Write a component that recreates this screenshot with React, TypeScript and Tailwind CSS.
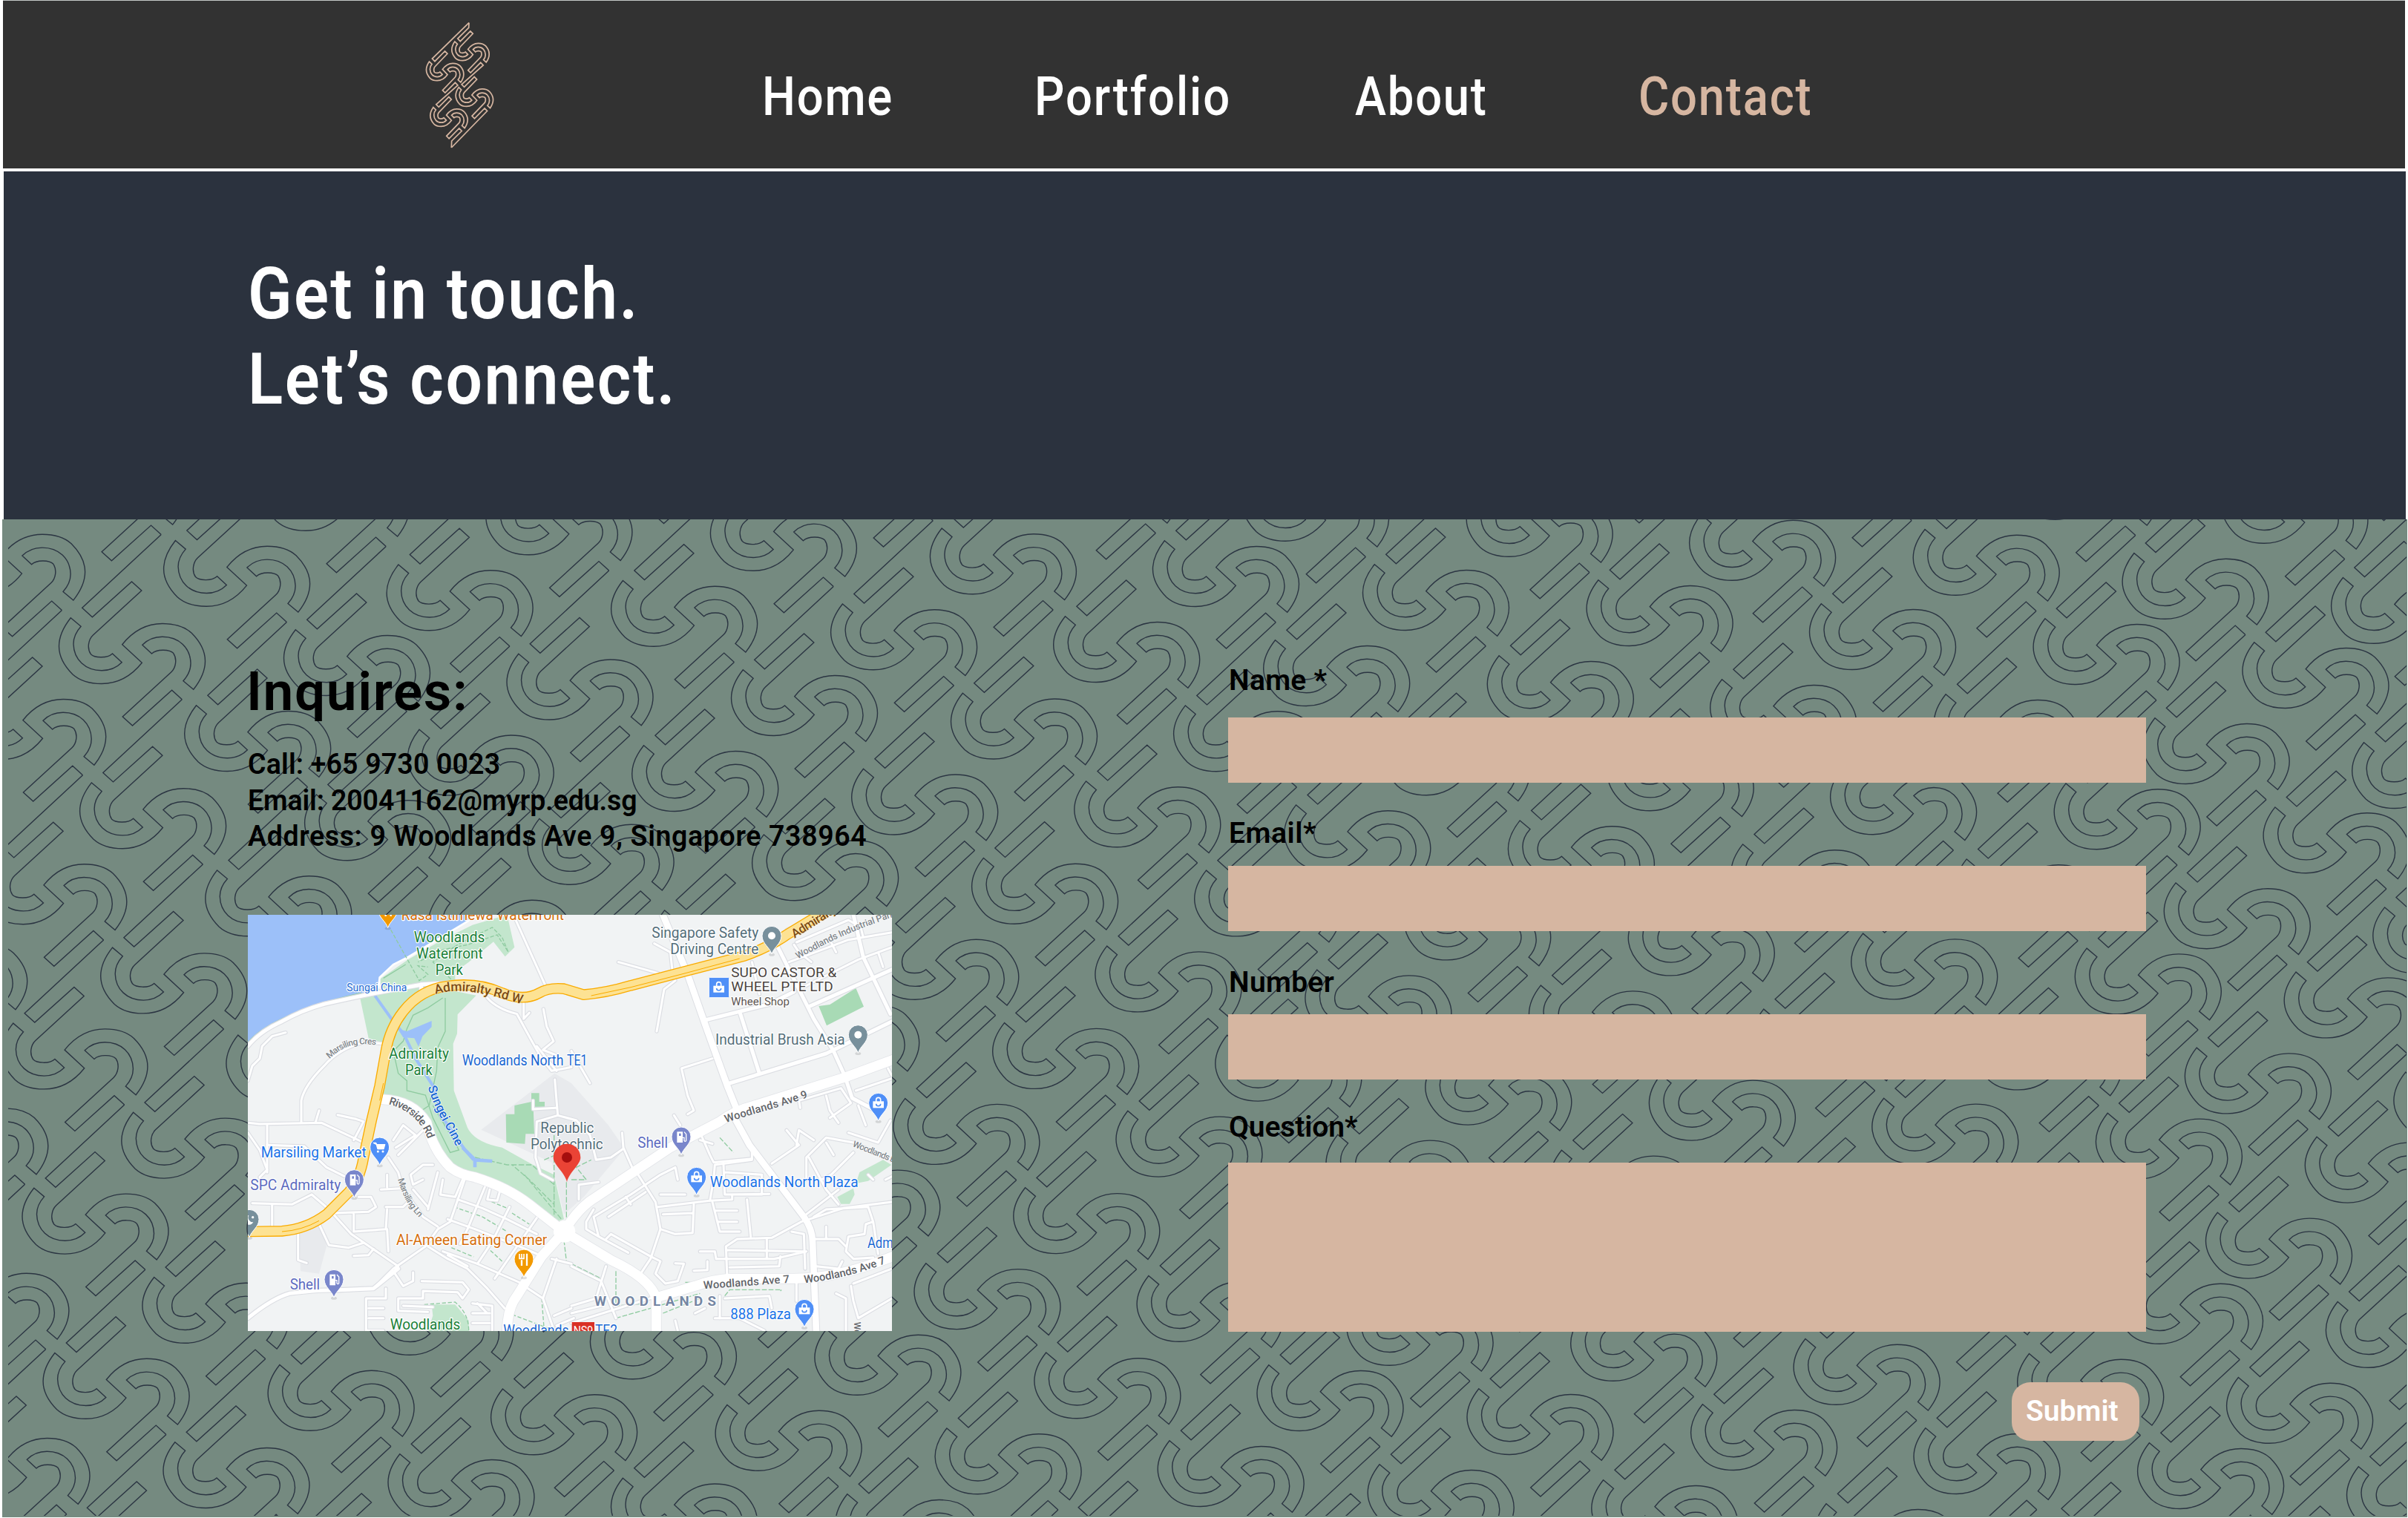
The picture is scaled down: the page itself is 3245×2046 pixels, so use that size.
import React from "react";

type Pt = [number, number];

/* ---------- ornament geometry ---------- */

const HALF_A =
  "L-67.3 -61.7 L-53.6 -49.3 L-0.5 -97 L12.8 -85 L-52.6 -25 C-59 -19 -61 -7 -55.6 .7 C-51 5.5 -34 7 -26.5 0 L-13.8 11.7 C-21 19 -31 22.7 -40.8 22.7 C-63 22.7 -78.5 8 -79 -13 C-79 -22 -75 -30 -68.9 -36.7 L-82.7 -48.3 C-94 -34 -98.5 -22 -98.5 -10 C-98.5 4 -90 18 -80 28 C-70 37 -56 40.5 -41 40.5 C-18 40.5 0 29 13.3 12.3 L-13.3 -12.3";
const HALF_B =
  "C0 -29 18 -40.5 41 -40.5 C56 -40.5 70 -37 80 -28 C90 -18 98.5 -4 98.5 10 C98.5 22 94 34 82.7 48.3 L68.9 36.7 C75 30 79 22 79 13 C78.5 -8 63 -22.7 40.8 -22.7 C31 -22.7 21 -19 13.8 -11.7 L26.5 0 C34 -7 51 -5.5 55.6 -.7 C61 7 59 19 52.6 25 L-12.8 85 L.5 97 L53.6 49.3 L67.3 61.7";

const UNIT = `M39.2 -160.5 ${HALF_A} ${HALF_B}`;
const PERIOD: Pt = [28.1, 222.2];
const LEFT_STEP: Pt = [-133.8, 102];

const STRANDS: Pt[] = [
  [-118, 868], [178, 881], [481, 897], [781.5, 929.5], [1084, 951], [1380, 982.5],
  [1652, 777], [1935, 809], [2236.6, 830], [2537, 862], [2838.6, 882], [3120.5, 914], [3402, 947],
];

const SPOTS: Pt[] = STRANDS.flatMap(([x, y]) => {
  const out: Pt[] = [];
  for (let m = -3; m < 7; m++) {
    const px = x + m * PERIOD[0];
    const py = y + m * PERIOD[1];
    out.push([px, py], [px + LEFT_STEP[0], py + LEFT_STEP[1]]);
  }
  return out.filter((p) => p[1] > 540 && p[1] < 2260);
});

function Ornament() {
  return (
    <svg className="absolute left-[8px] top-0 h-[1343px] w-[3232px]" viewBox="11 700 3232 1343" fill="none">
      <defs>
        <path id="unit" d={UNIT} />
      </defs>
      <g stroke="#2b3542" strokeWidth="1.4">
        {SPOTS.map(([x, y], i) => (
          <use key={i} href="#unit" x={x} y={y} />
        ))}
      </g>
    </svg>
  );
}

function transformPath(d: string, kx: number, ky: number, sx: number, sy: number) {
  let n = 0;
  return d.replace(/-?\d*\.?\d+/g, (v) => {
    const out = n % 2 === 0 ? kx + parseFloat(v) * sx : ky + parseFloat(v) * sy;
    n += 1;
    return out.toFixed(1);
  });
}

const logoS = (x: number, y: number) =>
  `${transformPath(HALF_A, x, y, 0.768, 0.87)} ${transformPath(HALF_B, x, y, 0.768, 0.87)}`;

function Logo() {
  const right = `M278 92 L277 112 ${logoS(284, 210)} ${logoS(300, 395)} L207 597`;
  const left = `M278 92 ${logoS(181, 291)} ${logoS(197, 476)} L208 570 L207 597`;
  return (
    <svg className="h-[174px] w-[98px]" viewBox="98 84 294 522" fill="none" stroke="#d6b6a1" strokeWidth="5.2">
      <path d={right} />
      <path d={left} />
    </svg>
  );
}

/* ---------- map ---------- */

const MINOR = [
  "M12 680 L30 620 L60 590 L70 540 L110 500 L165 485",
  "M565 530 L480 525 Q380 550 320 620 Q240 700 228 760 L228 850",
  "M12 850 L60 855 L310 850 L480 930",
  "M90 860 L90 1050 M300 800 L285 850 M375 818 L450 835 L480 845 L440 920",
  "M1095 30 L1140 130 L1215 295",
  "M980 345 Q1020 390 1100 410 L1160 520 L1200 590 L1240 640 L1320 625",
  "M1127 365 L1127 430 L1150 405 M1207 390 L1220 460 L1248 520 L1205 555 L1255 575 M1180 540 L1260 640",
  "M1253 675 L1265 820 L1180 845 L1175 990 L1195 1055 L1245 1082 M1165 760 L1165 795 L1255 790",
  "M1265 820 L1340 840 L1395 900 L1420 1000 L1480 990 L1530 955",
  "M12 890 L60 960 L90 1040 L60 1070 M90 940 L240 945 L330 1030 L470 1100",
  "M30 1175 L190 1180 L270 1140 M110 1180 L110 1270 M270 1140 L340 1200 L430 1300 L620 1430 L610 1440",
  "M360 1215 L500 1210 L530 1190 L510 1150 L460 1150 M570 1190 L640 1190 L660 1170 M440 1220 L440 1290 L570 1280 L575 1200 M575 1280 L580 1370",
  "M300 1260 L340 1345 L420 1355 L480 1335 M215 1300 L215 1405 L250 1417 M440 1388 L500 1385 L520 1360",
  "M580 990 L620 1050 L640 1120 L720 1230 L780 1270",
  "M610 950 L690 900 L640 860 L600 920 M620 980 L720 880 M550 1120 L630 1115 M575 1060 L575 1110",
  "M760 1020 L720 1020 L670 1060 L680 1100 L720 1080 M680 1120 L740 1190",
  "M890 1075 L830 1250 L780 1280 L730 1350 L600 1440 L520 1520 L360 1530",
  "M780 1050 L740 1200 M800 1080 L790 1140 L850 1150 L880 1080 M970 1110 L900 1280 L870 1340",
  "M1070 1190 L1000 1330 L940 1420 M860 1160 L960 1195 L1060 1240 L1180 1300 M820 1240 L930 1280 L1110 1350 L1180 1380",
  "M1180 1235 L1100 1350 L1010 1480 M740 1350 L820 1400 L900 1440 L980 1520 L1050 1600",
  "M800 1370 L940 1420 L1120 1500 M820 1385 L900 1430 M990 1120 L980 1160 L1020 1165 L1030 1130",
  "M600 1450 L640 1510 L680 1490 L680 1455 M715 1490 L880 1495 L905 1525 L880 1560 L860 1535 L720 1530 L720 1560 L620 1560 L620 1610 L740 1615",
  "M640 1590 L760 1595 M490 1560 L570 1560 L570 1520 M490 1560 L490 1690 L560 1690 M500 1600 L560 1600 M500 1640 L560 1640",
  "M920 1580 L1000 1590 L1000 1690 M920 1620 L990 1620 M920 1660 L990 1660 M940 1580 L980 1620",
  "M1240 1400 L1320 1420 M1145 1520 L1205 1560 L1250 1690 M1205 1560 L1260 1400 M1250 1630 L1320 1600 M1260 1670 L1330 1640",
  "M1655 125 L1720 160 L1730 250 M1510 200 L1670 245 M1740 275 L1695 310 L1665 480",
  "M1890 590 L1765 630 L1790 740 L1815 800 L1790 815 M1320 560 L1395 690",
  "M2050 200 L2080 330 M2220 130 L2240 160 L2290 200 M2230 120 L2440 30 L2490 60 L2500 100",
  "M2200 200 L2440 110 L2616 80 M2190 70 L2330 9 M2370 120 L2390 160 M2260 300 L2480 190 L2616 140 M2560 160 L2580 220",
  "M2350 740 L2365 800 L2400 850 M2365 830 L2450 770 L2410 710 L2240 760 M2470 720 L2616 670 M2600 630 L2616 660",
  "M1735 820 L1760 860 M2240 760 L2245 790 M2480 780 L2510 860",
  "M1525 890 L1530 950 L1570 1040 M1590 1060 L1660 1170 L1680 1280 L1640 1400 L1600 1460",
  "M1410 1200 L1380 1250 L1380 1280 L1430 1310 L1550 1375 M1410 1230 L1560 1140 L1680 1060 L1740 1030 L1750 1080 M1410 1230 L1430 1310",
  "M1470 1230 L1620 1130 M1540 1150 L1560 1180 M1460 1320 L1480 1300 L1640 1390 L1680 1410 L1660 1460 L1700 1500 L1750 1490 L1775 1420 L1740 1418",
  "M1430 1090 L1350 1100 L1350 1160 M1670 1190 L1880 1165 L1895 1080 L1900 1020 L2050 1000 L2050 960",
  "M1680 1280 L1740 1300 L1810 1295 L1815 1180 M1690 1220 L1810 1215 M1680 1140 L1780 1140",
  "M1880 1165 L1970 1160 L1970 1140 L2090 1140 L2090 1060 L1940 1050 M1935 1020 L1940 1140 L2120 1138",
  "M1890 1170 L1920 1290 L2000 1290 M1900 1205 L1990 1205 M1910 1250 L1990 1250 M2030 1160 L2045 1310",
  "M1950 1480 L1945 1350 L1990 1320 L2130 1315 L2250 1250 L2420 1195 L2616 1170",
  "M1950 1365 L2260 1370 M1950 1400 L2140 1400 L2270 1370 M2110 1320 L2110 1400 M1840 1370 L1900 1370 L1905 1400 L1945 1400 M1960 1435 L2160 1430 L2165 1390 M1815 1448 L1870 1445 L1870 1410",
  "M1845 900 L1880 980 L1895 1010 L2050 995 M1840 920 L1890 935 M2000 870 L2055 960 M2130 1015 L2240 940 L2190 880 M2230 940 L2240 880 L2300 920",
  "M2270 1080 L2270 990 L2350 910 L2460 930 L2616 1000 M2280 990 L2350 1120 L2400 1180 M2350 930 L2380 980 M2460 970 L2370 1060 L2330 1080 M2440 890 L2560 930 L2610 840",
  "M2270 1220 L2400 1120 M2300 1230 L2350 1200 L2520 1190 L2540 1250 L2560 1380 M2540 1250 L2510 1260 L2505 1300 L2440 1310 L2430 1370 L2460 1400 L2540 1395 M2300 1320 L2400 1320 L2430 1350 M2350 1270 L2350 1320",
  "M2210 1290 L2260 1300 L2265 1440 M2310 1430 L2400 1440 L2415 1410 M2230 1490 L2230 1570 M2450 1510 L2460 1570 L2480 1640 L2616 1560 M2460 1500 L2616 1440 M2390 1540 L2430 1560 L2430 1690",
  "M1940 1560 L2120 1550 L2130 1600 M1900 1640 L2000 1640 L2100 1690 M1740 1650 L1750 1690 M1320 1590 L1420 1560 L1460 1430 M1320 1620 L1440 1590 M1320 1430 L1440 1490 L1500 1640 M1320 1660 L1700 1540",
  "M2520 1060 L2540 1080 M2630 1060 L2590 1080 M1920 1550 L1920 1640 M1820 1620 L1860 1600",
];

const MEDIUM = [
  "M12 540 Q60 480 150 440 Q230 395 320 370 Q430 345 530 325 L720 290 L850 283 M713 290 L713 330",
  "M2150 130 L2220 270 L2300 430 L2380 560 L2425 660 L2455 750 L2550 800",
  "M2460 9 L2500 180 L2610 410",
  "M1860 435 L2120 370 L2220 320 M2280 380 L2616 230 M1960 690 L2350 570 L2616 440 M2000 400 L2080 650",
  "M12 1640 Q110 1560 180 1540 Q300 1525 360 1527 L520 1520 L620 1440",
];

const MAJOR = [
  "M1690 9 L1790 250 L1860 450 L1950 700 L1990 800 L1985 840 L2040 940 L2260 1230 Q2295 1280 2295 1330 L2310 1700",
];

const ARTERIAL = [
  "M555 755 Q680 760 735 850 Q760 960 830 1030 Q870 1060 930 1070 Q1060 1110 1150 1180 L1290 1290 L1480 1405 Q1640 1480 1663 1560 L1663 1700",
  "M1060 1700 Q1060 1600 1100 1550 L1200 1390 L1290 1290 Q1350 1190 1420 1150 L1720 950 L1920 845 Q1980 800 2060 780 L2270 715 L2430 665 L2620 595",
  "M1670 1555 L1820 1510 Q1900 1482 1960 1480 L2220 1480 Q2400 1480 2620 1390",
];

const TRUNK =
  "M12 1290 L150 1288 Q250 1280 330 1220 L420 1130 Q465 1080 480 990 L512 840 L545 700 L570 560 Q585 470 640 400 Q710 310 820 297 Q940 280 1040 325 Q1130 360 1190 325 Q1230 302 1290 308 L1370 332 Q1460 325 1560 295 L1770 240 L2020 175 Q2120 140 2190 90 L2330 5";

function Roads() {
  const layer = (ds: string[], w: number, color: string) => (
    <g fill="none" stroke={color} strokeWidth={w} strokeLinecap="round" strokeLinejoin="round">
      {ds.map((d) => (
        <path key={d} d={d} />
      ))}
    </g>
  );
  return (
    <g>
      {layer(MINOR, 16, "#dcdee3")}
      {layer(MEDIUM, 22, "#dcdee3")}
      {layer(MAJOR, 32, "#dcdee3")}
      {layer(ARTERIAL, 44, "#e3e5e9")}
      {layer(MINOR, 9, "#ffffff")}
      {layer(MEDIUM, 15, "#ffffff")}
      {layer(MAJOR, 26, "#ffffff")}
      {layer(ARTERIAL, 39, "#ffffff")}
      <circle cx="1292" cy="1290" r="44" fill="#fff" />
      {layer([TRUNK], 44, "#f9ab00")}
      {layer([TRUNK], 36, "#fde293")}
      <path d="M1400 336 L1560 302 L1770 248 L2000 186 M560 690 L545 760 M150 1290 Q230 1285 300 1246" fill="none" stroke="#f9ab00" strokeWidth="3" />
    </g>
  );
}

interface LabelProps {
  x: number;
  y: number;
  w: number;
  size?: number;
  color: string;
  children: string;
  weight?: number;
}

function Label({ x, y, w, size = 58, color, children, weight = 400 }: LabelProps) {
  return (
    <text x={x} y={y} textLength={w} lengthAdjust={weight === 400 ? "spacingAndGlyphs" : "spacing"} fontSize={size} fontWeight={weight} fill={color} stroke="#ffffff" strokeWidth="7" strokeLinejoin="round" paintOrder="stroke">
      {children}
    </text>
  );
}

function CurveLabel({ id, d, w, size, color, children, halo = "#ffffff" }: { id: string; d: string; w: number; size: number; color: string; children: string; halo?: string }) {
  return (
    <g>
      <path id={id} d={d} fill="none" />
      <text fontSize={size} fontWeight={500} fill={color} stroke={halo} strokeWidth="4" strokeLinejoin="round" paintOrder="stroke">
        <textPath href={`#${id}`} textLength={w}>
          {children}
        </textPath>
      </text>
    </g>
  );
}

const GLYPHS: Record<string, React.ReactNode> = {
  dot: <circle cx="0" cy="-74" r="15" fill="#fff" />,
  lock: (
    <g>
      <path d="M-9 -78 V-86 A9 9 0 0 1 9 -86 V-78" fill="none" stroke="#fff" strokeWidth="5" />
      <path d="M-22 -80 H22 V-53 H-22 Z" fill="#fff" />
      <path d="M-9 -70 A9 9 0 0 0 9 -70" fill="none" stroke="#4f8ff7" strokeWidth="5" />
    </g>
  ),
  fuel: (
    <g>
      <path d="M-17 -94 H6 V-50 H-17 Z" fill="#fff" />
      <path d="M-9 -87 H-1 V-77 H-9 Z" fill="#7986cb" />
      <path d="M6 -70 H12 V-58 Q16 -52 20 -58 V-84 L12 -93" fill="none" stroke="#fff" strokeWidth="4" />
    </g>
  ),
  cart: (
    <g>
      <path d="M-25 -91 H-15 L-8 -66 H16 L21 -84 H-12 Z" fill="#fff" stroke="#fff" strokeWidth="4" strokeLinejoin="round" />
      <circle cx="-7" cy="-56" r="4.5" fill="#fff" />
      <circle cx="13" cy="-56" r="4.5" fill="#fff" />
    </g>
  ),
  food: (
    <g stroke="#fff" fill="none">
      <path d="M-9 -70 V-47 M12 -96 V-47" strokeWidth="7" />
      <path d="M-18 -95 V-76 H0 V-95 M-9 -95 V-76" strokeWidth="5" />
    </g>
  ),
  moon: (
    <g>
      <path d="M-2 -90 A19 19 0 1 0 16 -62 A19 19 0 0 1 -2 -90 Z" fill="#fff" />
      <circle cx="14" cy="-82" r="5" fill="#fff" />
    </g>
  ),
};

function Pin({ x, y, color, glyph }: { x: number; y: number; color: string; glyph: string }) {
  return (
    <g transform={`translate(${x} ${y})`}>
      <ellipse cx="0" cy="2" rx="12" ry="6" fill="#000" opacity=".12" />
      <path d="M0 0 C-8 -28 -39 -42 -39 -74 A39 39 0 0 1 39 -74 C39 -42 8 -28 0 0 Z" fill={color} stroke="#fff" strokeWidth="3" />
      {GLYPHS[glyph]}
    </g>
  );
}

const GREEN = "#188038";
const BLUE = "#1a73e8";
const STATION = "#1967d2";
const SLATE = "#546e7a";
const INDIGO = "#5c6bc0";
const ORANGE = "#d56e0c";
const GREY = "#5f6368";

function CityMap() {
  return (
    <svg className="block h-[561px] w-[868px]" viewBox="12 9 2604 1683" fontFamily="Roboto, sans-serif">
      <rect x="12" y="9" width="2604" height="1683" fill="#f1f3f4" />
      <path d="M1252 650 L955 878 L1240 1010 L1290 1220 L1370 1150 L1535 955 L1470 860 L1320 690 Z" fill="#e8eaed" />
      <path d="M220 1300 L310 1260 L330 1350 L300 1460 L225 1450 Z" fill="#e8eaed" />
      <path d="M12 9 H935 L900 36 L780 108 L660 180 L600 210 L545 262 L540 305 L460 330 L320 360 Q200 400 120 450 L12 528 Z" fill="#9cc0f9" />
      <path d="M935 9 L900 36 L780 108 L660 180 L600 210 L545 262 L540 305" fill="none" stroke="#fff" strokeWidth="8" />
      <g fill="#c3e6cd">
        <path d="M920 50 L1060 9 L1090 140 L1052 178 L1005 118 L905 200 L850 240 L850 285 L640 305 L550 305 L548 268 L660 190 L790 115 Z" />
        <path d="M465 342 L640 300 L720 290 L935 335 L860 412 L858 490 L842 530 L845 720 L900 870 Q930 930 1040 950 L1165 1020 L1250 1060 L1290 1240 L1260 1250 L1150 1160 L1000 1080 L880 1040 L800 990 L740 880 L640 760 L555 735 L600 540 L500 508 Z" />
        <path d="M755 1585 L850 1585 L905 1650 L905 1692 L740 1692 L760 1630 Z" />
        <path d="M2395 1150 L2460 1115 L2465 1140 L2445 1178 L2410 1178 Z M2470 1095 L2485 1050 L2580 1000 L2614 1020 L2520 1085 Z" />
      </g>
      <g fill="#a8dab5">
        <path d="M1055 815 H1090 V780 L1158 765 V730 H1190 V765 H1212 V785 H1166 L1170 895 H1135 L1132 935 L1057 930 Z" />
        <path d="M2320 378 L2365 372 L2470 305 L2502 380 L2352 457 Z" />
      </g>
      <g fill="none" stroke="#8fcba0" strokeWidth="4">
        <path d="M810 345 V480 L780 545 L775 640 L745 780 L700 810 M800 345 L740 385 L680 415 L655 470 L640 520 L600 560 L620 650 L655 680 L655 720 L730 738 L760 830 L830 970 L865 960 L850 930 L760 780" />
        <path d="M590 70 L705 275 L740 250 L700 215 L740 220 M850 285 L760 200 L860 130 L1000 60 L1040 100 L1065 160 L1020 90 L900 130 L800 150 L700 200" strokeDasharray="16 7" />
        <path d="M560 265 L650 210 M12 525 Q60 470 160 425 Q250 375 470 325" />
        <path d="M930 990 L1060 1020 L1160 1020 L1250 1100 L1250 1180 L1150 1080 L1080 1020 M1130 1060 L1280 1240 M1250 900 V1240 M1300 1090 V1240 M1210 1000 L1300 960 M1320 1080 L1380 1080 L1340 1030 L1400 1000" strokeDasharray="22 8" />
        <path d="M845 1190 L960 1230 L1060 1290 M975 1160 L1060 1195 M1080 1215 L1150 1260 M835 1355 L925 1392 M975 1350 L1040 1410 M725 1585 L850 1575 Q905 1620 905 1690 M1080 1625 L1250 1690 M1200 1560 L1210 1690" strokeDasharray="16 8" />
        <path d="M1290 1325 L1300 1410 L1440 1480 L1460 1560 M1500 1450 V1590 L1630 1580 M1500 1640 L1640 1600 L1840 1540 M1690 1620 L1840 1560 M1780 1495 L1830 1495 M1940 1550 L1960 1525 H2170 L2165 1530 M1920 910 L1975 970" strokeDasharray="20 7" />
      </g>
      <g fill="none" stroke="#9cc0f9">
        <path d="M525 335 L600 440 L642 490 L690 590 L760 700 L800 830 L890 960 L925 1000" strokeWidth="12" />
        <path d="M880 950 L930 1000 L930 1030 M930 1000 L1000 1005" strokeWidth="14" />
      </g>
      <path d="M618 470 L655 480 L755 438 L755 462 L718 500 L702 542 L685 508 L640 505 Z" fill="#9cc0f9" />

      <Roads />

      <Label x={632} y={30} w={658} color={ORANGE}>Rasa Istimewa Waterfront</Label>
      <Label x={683} y={120} w={287} color={GREEN}>Woodlands</Label>
      <Label x={693} y={185} w={269} color={GREEN}>Waterfront</Label>
      <Label x={770} y={251} w={112} color={GREEN}>Park</Label>
      <Label x={412} y={319} w={243} size={43} color={STATION}>Sungai China</Label>
      <Label x={582} y={592} w={243} color={GREEN}>Admiralty</Label>
      <Label x={648} y={657} w={110} color={GREEN}>Park</Label>
      <Label x={878} y={619} w={410} color={STATION}>Woodlands North</Label>
      <Label x={1302} y={619} w={82} color={STATION}>TE1</Label>
      <Label x={1195} y={891} w={216} color={SLATE}>Republic</Label>
      <Label x={1155} y={957} w={293} color={SLATE}>Polytechnic</Label>
      <Label x={65} y={990} w={426} color={BLUE}>Marsiling Market</Label>
      <Label x={22} y={1122} w={366} color={INDIGO}>SPC Admiralty</Label>
      <Label x={612} y={1345} w={610} color={ORANGE}>Al-Ameen Eating Corner</Label>
      <Label x={182} y={1524} w={121} color={INDIGO}>Shell</Label>
      <Label x={587} y={1686} w={284} color={GREEN}>Woodlands</Label>
      <Label x={1045} y={1709} w={265} color={STATION}>Woodlands</Label>
      <rect x="1322" y="1656" width="91" height="50" fill="#d93025" />
      <text x="1328" y="1706" fontSize="52" textLength="80" lengthAdjust="spacingAndGlyphs" fill="#fff">NS9</text>
      <Label x={1416} y={1709} w={90} color={STATION}>TE2</Label>
      <Label x={1588} y={950} w={122} color={INDIGO}>Shell</Label>
      <Label x={1880} y={1109} w={600} color={BLUE}>Woodlands North Plaza</Label>
      <Label x={1412} y={1589} w={493} size={56} weight={700} color="#7586a3">WOODLANDS</Label>
      <Label x={1963} y={1643} w={245} color={BLUE}>888 Plaza</Label>
      <Label x={2517} y={1356} w={104} color={STATION}>Adm</Label>
      <Label x={1645} y={102} w={432} color={SLATE}>Singapore Safety</Label>
      <Label x={1720} y={168} w={357} color={SLATE}>Driving Centre</Label>
      <Label x={1966} y={262} w={426} size={56} color="#4a4340">SUPO CASTOR &amp;</Label>
      <Label x={1966} y={319} w={412} size={56} color="#4a4340">WHEEL PTE LTD</Label>
      <Label x={1966} y={375} w={236} size={46} color="#5c5552">Wheel Shop</Label>
      <Label x={1902} y={533} w={524} color={SLATE}>Industrial Brush Asia</Label>

      <CurveLabel id="c1" d="M770 330 C880 300 960 325 1130 372" w={356} size={52} color="#7b4a12" halo="#fde9b5">Admiralty Rd W</CurveLabel>
      <CurveLabel id="c2" d="M342 592 C400 535 450 525 535 536" w={205} size={36} color="#80868b">Marsiling Cres</CurveLabel>
      <CurveLabel id="c3" d="M580 775 C680 800 730 870 745 935" w={222} size={44} color={GREY}>Riverside Rd</CurveLabel>
      <CurveLabel id="c4" d="M740 705 C770 810 820 870 858 955" w={268} size={50} color={STATION}>Sungei Cine</CurveLabel>
      <CurveLabel id="c5" d="M618 1078 C640 1150 660 1190 712 1240" w={180} size={36} color="#80868b">Marsiling Ln</CurveLabel>
      <CurveLabel id="c6" d="M1945 850 C2060 810 2160 790 2290 742" w={348} size={44} color={GREY}>Woodlands Ave 9</CurveLabel>
      <CurveLabel id="c7" d="M2222 104 L2420 -20" w={205} size={50} color="#7b4a12" halo="#fde9b5">Admiralty</CurveLabel>
      <CurveLabel id="c8" d="M2236 188 Q2420 80 2640 12" w={430} size={38} color="#80868b">Woodlands Industrial Park</CurveLabel>
      <CurveLabel id="c9" d="M1855 1522 L2210 1496" w={348} size={44} color={GREY}>Woodlands Ave 7</CurveLabel>
      <CurveLabel id="c10" d="M2262 1498 Q2440 1480 2616 1408" w={340} size={44} color={GREY}>Woodlands Ave 7</CurveLabel>
      <CurveLabel id="c11" d="M2455 945 L2640 1018" w={195} size={36} color="#80868b">Woodlands Dr</CurveLabel>
      <CurveLabel id="c12" d="M2462 1655 L2462 1760" w={100} size={36} color={GREY}>Woodl</CurveLabel>

      <Pin x={578} y={62} color="#f29900" glyph="food" />
      <Pin x={2130} y={168} color="#78909c" glyph="dot" />
      <Pin x={2479} y={568} color="#78909c" glyph="dot" />
      <Pin x={18} y={1314} color="#78909c" glyph="moon" />
      <Pin x={545} y={1022} color="#4f8ff7" glyph="cart" />
      <Pin x={442} y={1153} color="#7986cb" glyph="fuel" />
      <Pin x={360} y={1557} color="#7986cb" glyph="fuel" />
      <Pin x={1764} y={980} color="#7986cb" glyph="fuel" />
      <Pin x={1128} y={1475} color="#f29900" glyph="food" />
      <Pin x={1826} y={1143} color="#4f8ff7" glyph="lock" />
      <Pin x={2561} y={843} color="#4f8ff7" glyph="lock" />
      <Pin x={2262} y={1677} color="#4f8ff7" glyph="lock" />
      <rect x="1876" y="262" width="82" height="82" rx="4" fill="#4f8ff7" stroke="#fff" strokeWidth="3" />
      <g transform="translate(1916 376)">{GLYPHS.lock}</g>
      <path d="M1302 1090 C1294 1050 1247 1020 1247 990 A55 55 0 0 1 1357 990 C1357 1020 1310 1050 1302 1090 Z" fill="#ea4335" />
      <circle cx="1302" cy="990" r="21" fill="#a50e0e" />
    </svg>
  );
}

/* ---------- page ---------- */

function Field({ label, tall, className, track }: { label: string; tall?: boolean; className: string; track: string }) {
  return (
    <label className={`flex flex-col ${className}`}>
      <span className={`ml-[1px] h-[46px] w-max whitespace-nowrap text-[39px] font-semibold leading-[47px] text-black ${track}`}>{label}</span>
      {tall ? (
        <textarea className="h-[228px] w-[1237px] resize-none bg-[#d6b6a1] outline-none" />
      ) : (
        <input className="h-[88px] w-[1237px] bg-[#d6b6a1] outline-none" />
      )}
    </label>
  );
}

export default function App() {
  return (
    <div className="h-[2046px] w-[3245px] overflow-hidden bg-white font-['Roboto',sans-serif]">
      <header className="ml-[4px] flex h-[227px] w-[3237px] border-t border-[#c5c9c8] bg-[#323232] text-[72px] font-medium leading-[84px]">
        <div className="ml-[568px] mt-[27px] w-[98px]">
          <Logo />
        </div>
        <nav className="ml-[357px] mt-[88px] flex text-white">
          <a className="w-[367px]"><span className="inline-block origin-left scale-x-[.88] tracking-[2px]">Home</span></a>
          <a className="w-[432px]"><span className="inline-block origin-left scale-x-[.88] tracking-[2.2px]">Portfolio</span></a>
          <a className="w-[382px]"><span className="inline-block origin-left scale-x-[.88] tracking-[2px]">About</span></a>
          <a className="text-[#d6b6a1]"><span className="inline-block origin-left scale-x-[.88] tracking-[2px]">Contact</span></a>
        </nav>
      </header>
      <div className="ml-[4px] h-[4px] w-[3236px] bg-white" />
      <section className="ml-[5px] h-[469px] w-[3237px] bg-[#2b323e] pl-[329px] pt-[108px] text-[97px] font-semibold leading-[115px] text-white">
        <h1 className="flex flex-col items-start">
          <span className="origin-left scale-x-[.9] tracking-[2.7px]">Get in touch.</span>
          <span className="origin-left scale-x-[.9] tracking-[2.9px]">Let’s connect.</span>
        </h1>
      </section>
      <main className="relative ml-[3px] flex h-[1345px] w-[3241px] bg-[#758a80]">
        <Ornament />
        <div className="relative ml-[331px] mt-[190px] w-[1321px]">
          <h2 className="-ml-[2px] w-max text-[73px] font-semibold leading-[84px] tracking-[1.6px] text-black">Inquires:</h2>
          <div className="mt-[32px] flex flex-col items-start whitespace-nowrap text-[39px] font-semibold leading-[48.6px] text-black">
            <span className="origin-left scale-x-[.96] tracking-[.2px]">Call: +65 9730 0023</span>
            <span className="origin-left scale-x-[.96] tracking-[-.1px]">Email: 20041162@myrp.edu.sg</span>
            <span className="origin-left scale-x-[.96] tracking-[.7px]">Address: 9 Woodlands Ave 9, Singapore 738964</span>
          </div>
          <div className="mt-[81px]">
            <CityMap />
          </div>
        </div>
        <form className="relative mt-[194px] flex w-[1237px] flex-col">
          <Field label="Name *" track="tracking-[.3px]" className="gap-[27px]" />
          <Field label="Email*" track="tracking-[.6px]" className="mt-[45px] gap-[21px]" />
          <Field label="Number" track="tracking-[.3px]" className="mt-[46px] gap-[20px]" />
          <Field label="Question*" track="tracking-[-.1px]" className="mt-[41px] gap-[25px]" tall />
          <button type="button" className="ml-[1056px] mt-[68px] h-[79px] w-[172px] rounded-[25px] bg-[#d6b6a1] pl-[19px] text-left text-[39px] font-semibold leading-[75px] text-white">
            Submit
          </button>
        </form>
      </main>
    </div>
  );
}
